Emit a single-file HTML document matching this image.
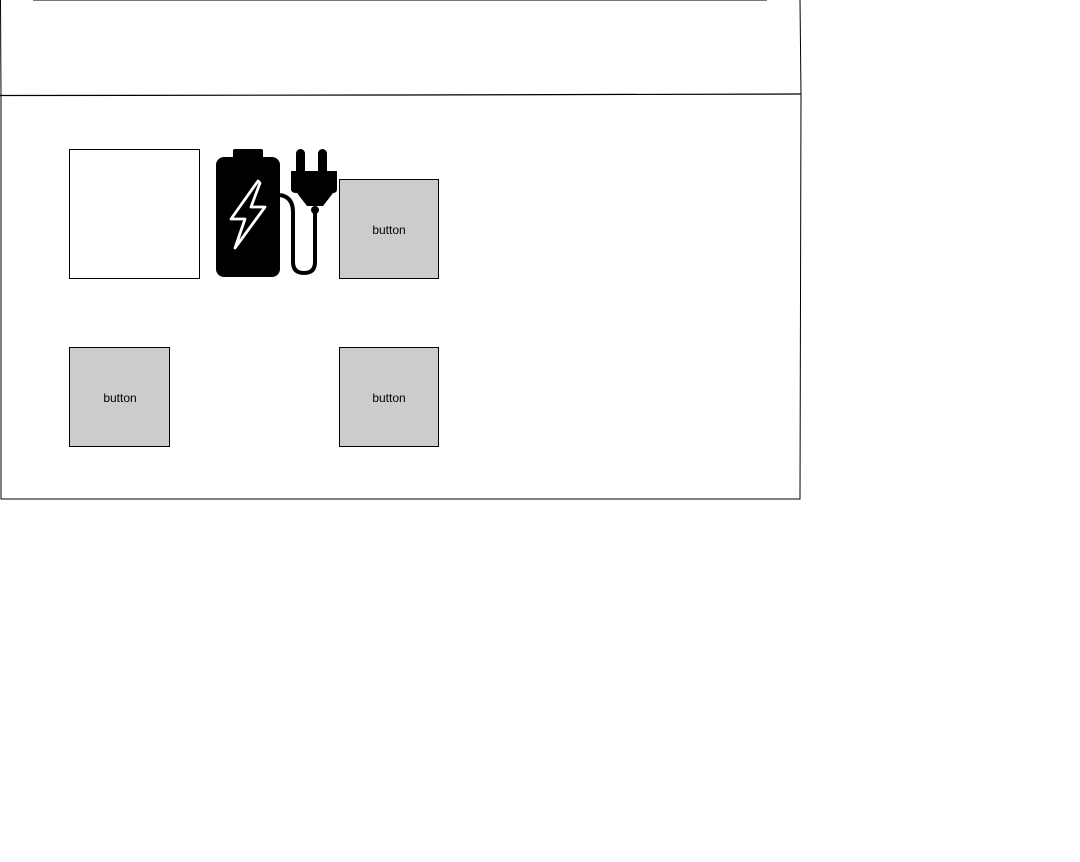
<!DOCTYPE html>
<html><head><style>
body{margin:0;width:1080px;height:857px;background:#fff;overflow:hidden;font-family:"Comic Sans MS","Liberation Sans",sans-serif}
</style></head><body>
<svg width="1080" height="857" xmlns="http://www.w3.org/2000/svg">
<line x1="33" y1="0.5" x2="767" y2="0.5" stroke="#777" stroke-width="1"/>
<path d="M0.5 0 L1 95 L1 499 L800 499 L801 94 L800 0" fill="none" stroke="#000" stroke-width="1"/>
<path d="M0 95.5 L400 95 L801 94" fill="none" stroke="#000" stroke-width="1.2"/>
<rect x="69.5" y="149.5" width="130" height="129" fill="#fff" stroke="#000"/>
<rect x="339.5" y="179.5" width="99" height="99" fill="#ccc" stroke="#000"/>
<rect x="69.5" y="347.5" width="100" height="99" fill="#ccc" stroke="#000"/>
<rect x="339.5" y="347.5" width="99" height="99" fill="#ccc" stroke="#000"/>
<text x="389" y="234" font-size="12" text-anchor="middle" font-family="Liberation Sans, sans-serif">button</text>
<text x="120" y="402" font-size="12" text-anchor="middle" font-family="Liberation Sans, sans-serif">button</text>
<text x="389" y="402" font-size="12" text-anchor="middle" font-family="Liberation Sans, sans-serif">button</text>
<rect x="233" y="149" width="30" height="12" rx="2" fill="#000"/>
<rect x="216" y="157" width="64" height="120" rx="8" fill="#000"/>
<path d="M258 181 L231 219 L245 219 L235 248 L265 207 L251 207 L260 183 Z" fill="none" stroke="#fff" stroke-width="2.8" stroke-linejoin="round"/>
<rect x="296" y="149" width="9" height="26" rx="4.5" fill="#000"/>
<rect x="318" y="149" width="9" height="26" rx="4.5" fill="#000"/>
<path d="M291 171 H337 V189 Q337 193 333 193 L323 206 H307 L297 193 Q291 193 291 189 Z" fill="#000"/>
<circle cx="315" cy="210" r="4" fill="#000"/>
<path d="M315 212 V262 Q315 273 304 273 Q293 273 293 262 V212 Q293 197 280 195" fill="none" stroke="#000" stroke-width="4"/>
</svg>
</body></html>
